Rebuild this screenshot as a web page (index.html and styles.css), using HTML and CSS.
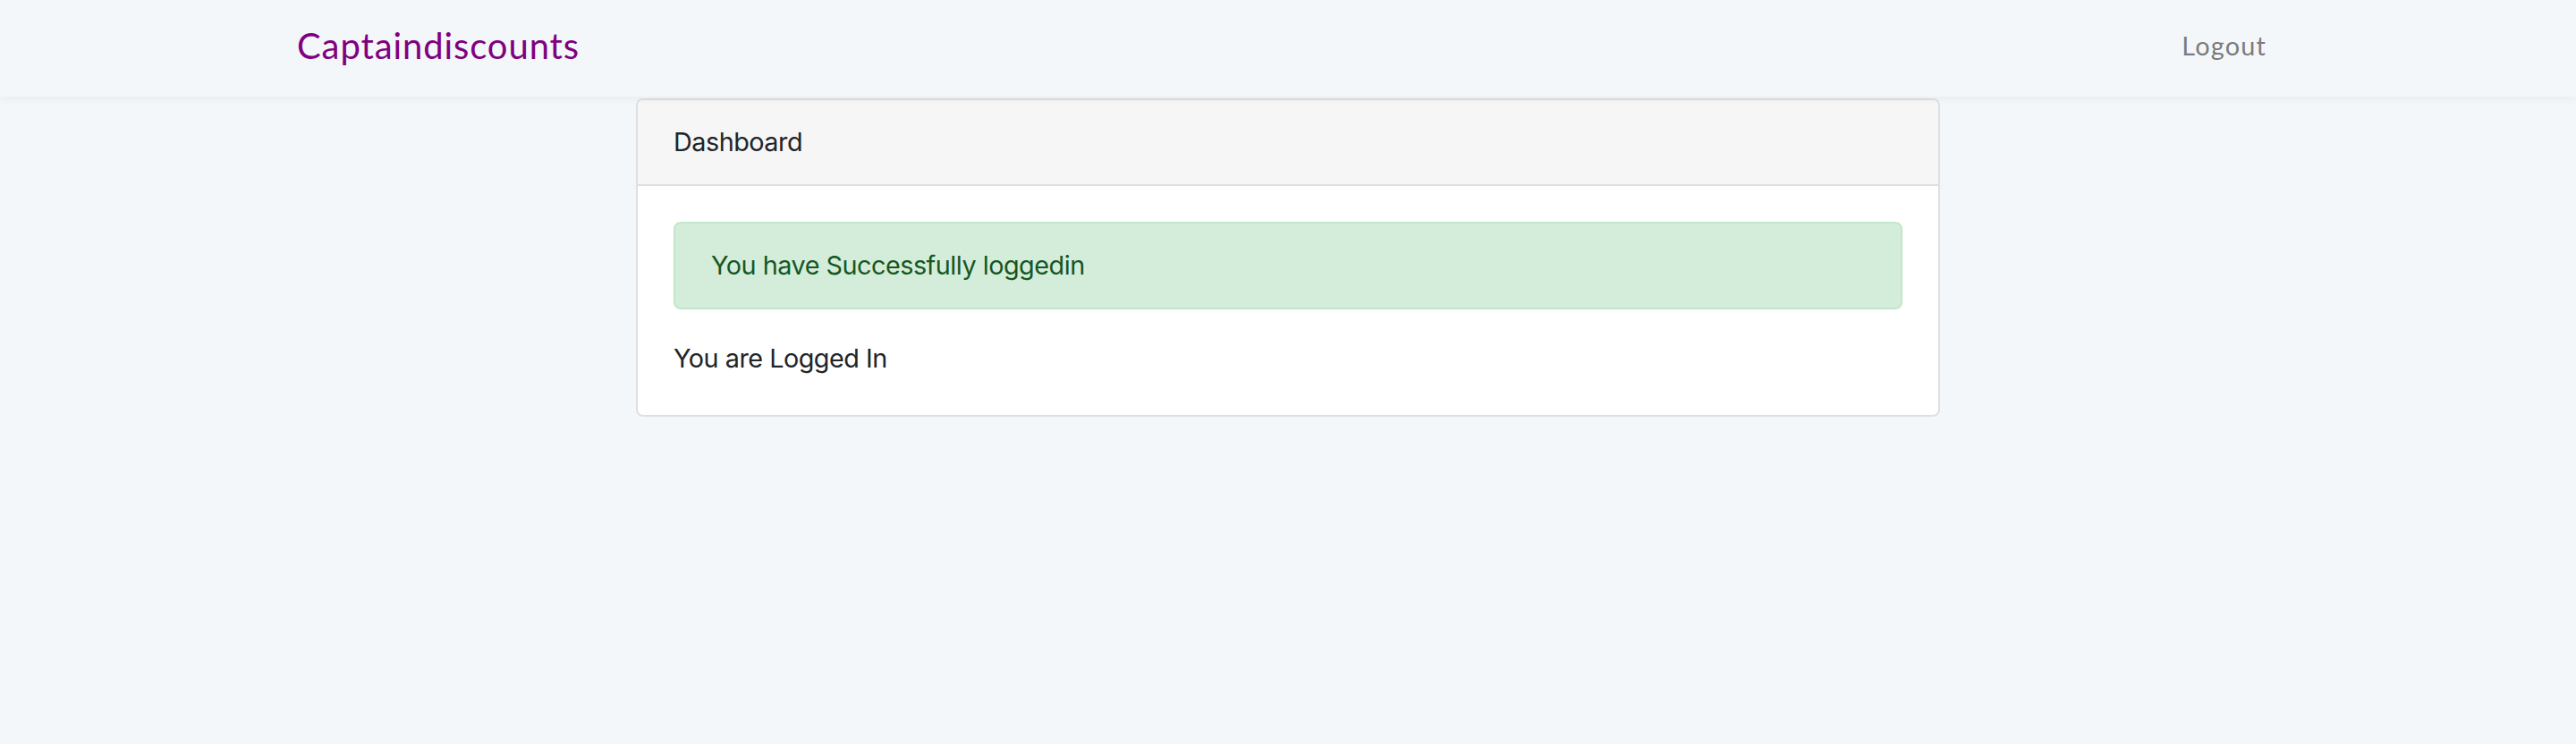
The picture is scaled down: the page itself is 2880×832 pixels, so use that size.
FILE: index.html
```html
<!DOCTYPE html>
<html lang="en">
<head>
<meta charset="utf-8">
<title>Captaindiscounts</title>
<link rel="stylesheet" href="styles.css">
</head>
<body>
<nav class="navbar">
  <div class="container nav-inner">
    <a class="brand" href="#">Captaindiscounts</a>
    <a class="nav-link" href="#">Logout</a>
  </div>
</nav>
<main class="main">
  <div class="card">
    <div class="card-header">Dashboard</div>
    <div class="card-body">
      <div class="alert">You have Successfully loggedin</div>
      <p class="msg">You are Logged In</p>
    </div>
  </div>
</main>
</body>
</html>
```

FILE: styles.css
```css
* { box-sizing: border-box; }
html, body { margin: 0; padding: 0; }
body {
  background: #f4f7fa;
  font-family: Inter, "Noto Sans", "Liberation Sans", sans-serif;
  font-size: 28.8px;
  line-height: 1.6;
  letter-spacing: -0.5px;
  color: #212529;
  height: 832px;
}
.navbar {
  height: 108px;
  background: #f4f7fa;
  box-shadow: 0 4px 8px rgba(0,0,0,0.04);
  position: relative;
  z-index: 1;
}
.container {
  width: 2280px;
  margin: 0 auto;
  padding: 0 30px;
}
.nav-inner {
  height: 100%;
  display: flex;
  align-items: center;
  justify-content: space-between;
  padding-bottom: 6px;
}
.brand {
  font-family: Lato, "Open Sans", sans-serif;
  font-size: 40px;
  letter-spacing: 0.9px;
  color: #800080;
  text-decoration: none;
  line-height: 1;
  padding-left: 2px;
}
.nav-link {
  font-family: Lato, "Open Sans", sans-serif;
  font-size: 28.8px;
  letter-spacing: 1.2px;
  color: #7a7b7d;
  text-decoration: none;
  padding-right: 16px;
}
.main {
  display: flex;
  justify-content: center;
  padding-top: 2px;
}
.card {
  width: 1458px;
  background: #fff;
  border: 2px solid #dfdfdf;
  border-radius: 8px;
  overflow: hidden;
}
.card-header {
  background: #f6f6f6;
  border-bottom: 2px solid #dfdfdf;
  padding: 24px 40px;
  height: 96px;
}
.card-body {
  padding: 40px;
}
.alert {
  background: #d4edda;
  border: 2px solid #c3e6cb;
  color: #155724;
  border-radius: 8px;
  padding: 24px 40px;
  margin-bottom: 32px;
}
.msg { margin: 0; }
```
